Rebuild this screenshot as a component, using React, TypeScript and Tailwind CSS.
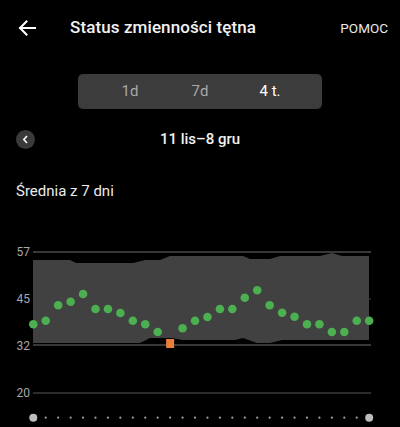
import React from "react";

const values = [
  323.3, 319.7, 304.3, 300.7, 293, 308, 308, 312, 319.7, 323.3, 331, 342.5, 327.3, 319.7,
  316, 308, 308, 296.7, 289.3, 304.3, 311.7, 315.7, 323.3, 323.3, 331, 331, 319.7, 319.7,
];

const X0 = 33.3;
const STEP = 12.44;
const TOP = 240;

function BackArrow() {
  return (
    <svg width="18" height="16" viewBox="0 0 18 16" fill="none">
      <path d="M17 8H2M8.5 1.5L2 8l6.5 6.5" stroke="white" strokeWidth="2" strokeLinecap="square" />
    </svg>
  );
}

function Chart() {
  const y = (v: number) => v - TOP;
  const band =
    "M33,19 L70,19 L76,22 L133,22 L145,19 L160,19 L170,15 L243,15 L250,18 L270,18 L280,15 L320,15 L332,12 L342,15 L369,15 " +
    "L369,99 L282,99 L270,102 L257,102 L243,97 L235,99 L182,99 L172,97 L150,97 L140,102 L33,102 Z";

  return (
    <svg width="400" height="187" viewBox="0 0 400 187" className="block">
      <line x1="33" x2="371" y1={y(251)} y2={y(251)} stroke="#4a4a4a" strokeWidth="1.5" />
      <line x1="33" x2="371" y1={y(298)} y2={y(298)} stroke="#3a3a3a" strokeWidth="1" />
      <line x1="33" x2="371" y1={y(344)} y2={y(344)} stroke="#4a4a4a" strokeWidth="1.5" />
      <line x1="33" x2="371" y1={y(392)} y2={y(392)} stroke="#3a3a3a" strokeWidth="1.5" />
      <path d={band} fill="#414141" />
      {[
        ["57", 251],
        ["45", 298],
        ["32", 345],
        ["20", 392],
      ].map(([t, py]) => (
        <text
          key={t}
          x="30"
          y={y(py as number) + 4}
          textAnchor="end"
          fontSize="12"
          fill="#a8a8a8"
          fontFamily="Roboto, sans-serif"
        >
          {t}
        </text>
      ))}
      {values.map((v, i) =>
        i === 11 ? (
          <rect key={i} x={X0 + STEP * i - 4} y={y(v) - 4.5} width="8" height="9" fill="#e8803a" />
        ) : (
          <circle key={i} cx={X0 + STEP * i} cy={y(v)} r="4.3" fill="#4caf50" />
        )
      )}
      {values.map((_, i) =>
        i === 0 || i === values.length - 1 ? (
          <circle key={"d" + i} cx={X0 + STEP * i} cy={y(416.7)} r="4" fill="#bdbdbd" />
        ) : (
          <circle key={"d" + i} cx={X0 + STEP * i} cy={y(416.7)} r="1.1" fill="#9e9e9e" />
        )
      )}
    </svg>
  );
}

export default function App() {
  return (
    <div className="w-[400px] h-[427px] overflow-hidden bg-black text-white font-['Roboto',sans-serif]">
      <header className="flex items-center h-[56px] pl-[18px] pr-[12px]">
        <BackArrow />
        <h1 className="ml-[34px] text-[17px] font-medium text-[#f2f2f2] tracking-[0.1px]">
          Status zmienności tętna
        </h1>
        <span className="ml-auto text-[13.5px] text-[#e8e8e8]">POMOC</span>
      </header>

      <div className="flex justify-center mt-[18px]">
        <div className="grid grid-cols-3 items-center w-[244px] h-[35px] px-[17px] rounded-[5px] bg-[#3c3c3c] text-[15px]">
          <span className="text-center text-[#a8a8a8]">1d</span>
          <span className="text-center text-[#a8a8a8]">7d</span>
          <span className="text-center text-white">4 t.</span>
        </div>
      </div>

      <div className="relative flex items-center justify-center h-[28px] mt-[16px]">
        <div className="absolute left-[16px] flex items-center justify-center w-[19px] h-[19px] rounded-full bg-[#3a3a3a]">
          <svg width="7" height="9" viewBox="0 0 7 9" fill="none">
            <path d="M5 1L1.8 4.5L5 8" stroke="white" strokeWidth="1.6" />
          </svg>
        </div>
        <span className="text-[15px] font-medium text-[#f2f2f2]">11 lis–8 gru</span>
      </div>

      <p className="mt-[27px] pl-[16px] text-[15px] text-[#ececec]">Średnia z 7 dni</p>

      <div className="mt-[38px]">
        <Chart />
      </div>
    </div>
  );
}
